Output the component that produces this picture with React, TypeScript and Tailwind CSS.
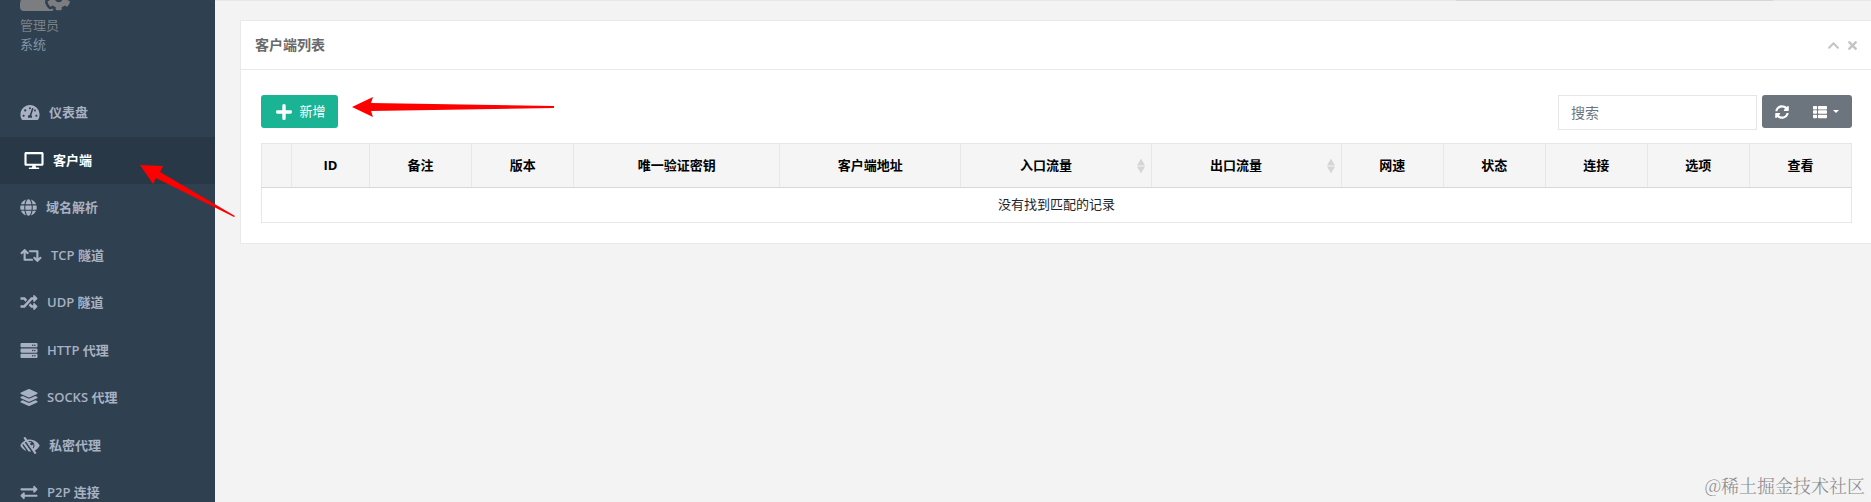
import React, { useState } from "react";
import {
  FaChevronUp,
  FaDesktop,
  FaExchangeAlt,
  FaGlobe,
  FaLayerGroup,
  FaLowVision,
  FaPlus,
  FaRandom,
  FaRetweet,
  FaServer,
  FaSyncAlt,
  FaTachometerAlt,
  FaThList,
  FaTimes,
  FaUserCog,
} from "react-icons/fa";

const menu = [
  { label: "仪表盘", icon: FaTachometerAlt, width: "w-5" },
  { label: "客户端", icon: FaDesktop, width: "w-5", active: true },
  { label: "域名解析", icon: FaGlobe, width: "w-[17px]" },
  { label: "TCP 隧道", icon: FaRetweet, width: "w-[22px]" },
  { label: "UDP 隧道", icon: FaRandom, width: "w-[18px]" },
  { label: "HTTP 代理", icon: FaServer, width: "w-[18px]" },
  { label: "SOCKS 代理", icon: FaLayerGroup, width: "w-[18px]" },
  { label: "私密代理", icon: FaLowVision, width: "w-5" },
  { label: "P2P 连接", icon: FaExchangeAlt, width: "w-[18px]" },
];

const columns = [
  { label: "", width: "w-[30px]" },
  { label: "ID", width: "w-[78px]" },
  { label: "备注", width: "w-[102px]" },
  { label: "版本", width: "w-[102px]" },
  { label: "唯一验证密钥", width: "w-[206px]" },
  { label: "客户端地址", width: "w-[181px]" },
  { label: "入口流量", width: "w-[190px]", sortable: true },
  { label: "出口流量", width: "w-[190px]", sortable: true },
  { label: "网速", width: "w-[102px]" },
  { label: "状态", width: "w-[102px]" },
  { label: "连接", width: "w-[102px]" },
  { label: "选项", width: "w-[102px]" },
  { label: "查看", width: "w-[102px]" },
];

const Sidebar = () => (
  <aside className="w-[215px] shrink-0 overflow-hidden bg-[#2f4050] text-[#a7b1c2]">
    <div className="-mt-[29px] flex h-[118px] flex-col px-5">
      <FaUserCog className="h-10 w-[50px] shrink-0 text-[#7b7d80]" />
      <span className="mt-[5px] text-[13px] leading-[19px] text-[#7c8187]">管理员</span>
      <span className="text-[13px] leading-[19px] text-[#8095a8]">系统</span>
    </div>
    <nav>
      <ul>
        {menu.map(({ label, icon: Icon, width, active }) => (
          <li key={label}>
            <a
              href="#"
              className={
                active
                  ? "flex items-center gap-[9px] border-l-4 border-[#293846] bg-[#293846] px-5 py-3.5 text-[13px] leading-normal font-semibold text-white"
                  : "flex items-center gap-[9px] px-5 py-3.5 text-[13px] leading-normal font-semibold"
              }
            >
              <Icon className={`${width} h-[17px] shrink-0`} />
              {label}
            </a>
          </li>
        ))}
      </ul>
    </nav>
  </aside>
);

const SortMark = () => (
  <svg
    viewBox="0 0 8 15"
    className="absolute top-1/2 right-1.5 h-[15px] w-2 -translate-y-1/2 fill-[#d6d6d6]"
  >
    <path d="M4 0l4 7H0zM4 15L0 8h8z" />
  </svg>
);

const ClientTable = () => (
  <table className="mt-[13px] w-full table-fixed border-collapse border border-[#e7e7e7] text-center text-[13px] text-[#212529]">
    <thead className="bg-[#f5f5f6]">
      <tr>
        {columns.map(({ label, width, sortable }) => (
          <th
            key={label}
            className={`${width} ${sortable ? "pr-5" : ""} relative h-11 border border-[#e7e7e7] border-b-[#d8d8d8] font-bold text-black`}
          >
            {label}
            {sortable && <SortMark />}
          </th>
        ))}
      </tr>
    </thead>
    <tbody>
      <tr>
        <td colSpan={13} className="h-[35px] border border-[#e7e7e7]">
          没有找到匹配的记录
        </td>
      </tr>
    </tbody>
  </table>
);

const App = () => {
  const [search, setSearch] = useState("");

  return (
    <div className="relative flex h-screen overflow-hidden bg-[#f3f3f4] font-['Open_Sans','Noto_Sans_CJK_SC',sans-serif] text-[13px] text-[#676a6c]">
      <Sidebar />
      <main className="min-w-0 flex-1">
        {/* bottom edge of the top bar */}
        <div className="flex h-px justify-end bg-[#e7e7e8] pr-[98px]">
          <div className="w-[317px] bg-[#d6d6d6]" />
        </div>
        <section className="mt-[19px] ml-[25px] border border-r-0 border-[#e7eaec] bg-white">
          <header className="flex h-[49px] items-center justify-between border-b border-[#e7eaec] pr-3 pl-3.5">
            <h5 className="text-sm font-semibold">客户端列表</h5>
            <div className="flex items-center gap-1.5 text-[#c4c4c4]">
              <button type="button" aria-label="收起">
                <FaChevronUp className="size-[13px]" />
              </button>
              <button type="button" aria-label="关闭">
                <FaTimes className="size-[13px]" />
              </button>
            </div>
          </header>
          <div className="pt-[25px] pr-[19px] pb-5 pl-5">
            <div className="flex items-start justify-between">
              <button
                type="button"
                className="flex h-[33px] w-[77px] items-center justify-center gap-1.5 rounded-[3px] bg-[#1ab394] pl-0.5 text-white"
              >
                <FaPlus className="size-[18px]" />
                新增
              </button>
              <div className="flex items-start gap-[5px]">
                <input
                  type="text"
                  aria-label="搜索"
                  placeholder="搜索"
                  value={search}
                  onChange={(e) => setSearch(e.target.value)}
                  className="h-[35px] w-[199px] border border-[#e5e6e7] px-3 text-sm placeholder:text-[#6c757d]"
                />
                <div className="flex h-[33px] overflow-hidden rounded-[3px] bg-[#6c757d] text-white">
                  <button type="button" aria-label="刷新" className="w-10 pl-[13px]">
                    <FaSyncAlt className="size-3.5" />
                  </button>
                  <button
                    type="button"
                    aria-label="列"
                    className="flex w-[50px] items-center gap-1.5 pl-[11px]"
                  >
                    <FaThList className="size-3.5" />
                    <span className="border-x-3 border-t-3 border-x-transparent border-t-white" />
                  </button>
                </div>
              </div>
            </div>
            <ClientTable />
          </div>
        </section>
      </main>

      {/* guide arrows */}
      <svg
        viewBox="0 0 96 54"
        className="absolute top-[164px] left-[140px] h-[54px] w-24 fill-[#fe0000]"
      >
        <path d="M0 1L23 2L20 8L95 52L94 53L16 14L13 20Z" />
      </svg>
      <svg
        viewBox="0 0 202 20"
        className="absolute top-[97px] left-[352px] h-5 w-[202px] fill-[#fe0000]"
      >
        <path d="M0 10L21 0L19 6L202 9V11L19 14L21 20Z" />
      </svg>

      <span className="absolute right-1.5 bottom-[3px] font-['Noto_Serif_CJK_SC','Noto_Sans_CJK_SC',serif] text-lg font-light text-[#8a8a8a]">
        @稀土掘金技术社区
      </span>
    </div>
  );
};

export default App;
